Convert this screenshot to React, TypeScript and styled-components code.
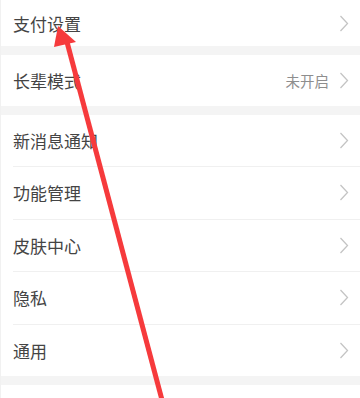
import React from "react";
import styled, { createGlobalStyle } from "styled-components";

const GlobalStyle = createGlobalStyle`
	html, body {
		margin: 0;
		padding: 0;
		background: #ffffff;
	}
	body {
		font-family: "Noto Sans CJK SC", "Noto Sans", sans-serif;
	}
`;

interface IRow {
	label: string;
	value?: string;
}

const groups: { rows: IRow[]; first?: boolean }[] = [
	{ rows: [{ label: "支付设置" }], first: true },
	{ rows: [{ label: "长辈模式", value: "未开启" }] },
	{
		rows: [
			{ label: "新消息通知" },
			{ label: "功能管理" },
			{ label: "皮肤中心" },
			{ label: "隐私" },
			{ label: "通用" },
		],
	},
	{ rows: [] },
];

const Chevron = () => (
	<svg width="10" height="17" viewBox="0 0 10 17" fill="none">
		<path d="M1.5 1L8.5 8.5L1.5 16" stroke="#c4c4c4" strokeWidth="1.3" />
	</svg>
);

export default function App() {
	return (
		<Page>
			<GlobalStyle />
			{groups.map((g, gi) => (
				<Group key={gi} $empty={g.rows.length === 0}>
					{g.rows.map((r, ri) => (
						<Row key={r.label} $first={g.first} $divider={ri > 0}>
							<Label>{r.label}</Label>
							<Right>
								{r.value && <Value>{r.value}</Value>}
								<Chevron />
							</Right>
						</Row>
					))}
				</Group>
			))}
			<Arrow viewBox="0 0 360 398" width="360" height="398">
				<line x1="66" y1="42" x2="161" y2="400" stroke="#f63a3c" strokeWidth="5" />
				<polygon points="57,26 53,47 75,42" fill="#f63a3c" />
			</Arrow>
		</Page>
	);
}

const Page = styled.div`
	position: relative;
	width: 360px;
	height: 398px;
	overflow: hidden;
	background: #f4f4f4;
	display: flex;
	flex-direction: column;
	gap: 9px;
	border-left: 1px solid #f1f1f1;
	box-sizing: border-box;
`;

const Group = styled.div<{ $empty?: boolean }>`
	background: #ffffff;
	display: flex;
	flex-direction: column;
	${(p) => (p.$empty ? "flex: 1;" : "")}
`;

const Row = styled.div<{ $first?: boolean; $divider?: boolean }>`
	height: ${(p) => (p.$first ? "46px" : p.$divider ? "52.5px" : "51px")};
	margin-left: 12px;
	padding-right: 11px;
	display: flex;
	align-items: center;
	justify-content: space-between;
	border-top: ${(p) => (p.$divider ? "1px solid #f0f0f0" : "none")};
	box-sizing: border-box;
`;

const Label = styled.span`
	font-size: 17px;
	color: #444444;
`;

const Right = styled.div`
	display: flex;
	align-items: center;
	gap: 10px;
`;

const Value = styled.span`
	font-size: 14.5px;
	color: #8e8e8e;
`;

const Arrow = styled.svg`
	position: absolute;
	left: 0;
	top: 0;
	pointer-events: none;
`;
